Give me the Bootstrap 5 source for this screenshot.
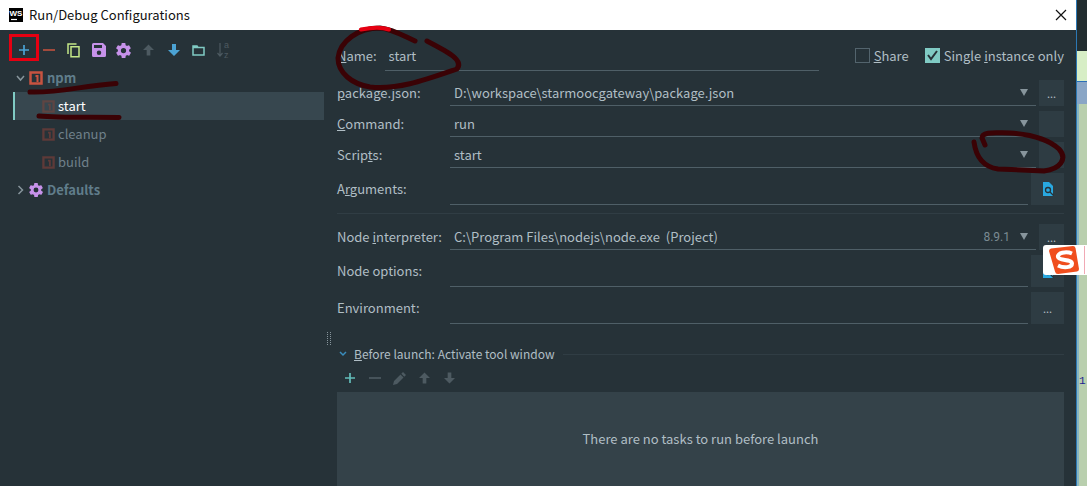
<!DOCTYPE html>
<html lang="en">
<head>
<meta charset="utf-8">
<meta name="viewport" content="width=device-width, initial-scale=1">
<title>Run/Debug Configurations</title>
<link href="https://cdn.jsdelivr.net/npm/bootstrap@5.3.0/dist/css/bootstrap.min.css" rel="stylesheet">
<style>
  body { background: #263238; color: #b0bec5; font: 13px/20px "Noto Sans CJK SC", "Noto Sans", sans-serif; overflow: hidden; }
  svg { display: block; flex: none; }
  .titlebar { height: 30px; background: #fff; color: #111; padding: 0 9px; gap: 6px; }
  .titlebar button, .tool, .disclosure { border: 0; background: none; padding: 0; color: inherit; }
  .ws { width: 14px; height: 14px; }
  .sidebar { width: 324px; padding: 6px 0 0 11px; }
  .tool { width: 25px; height: 28px; display: flex; align-items: center; justify-content: center; }
  .tree { padding-left: 2px; }
  .tree-row { height: 28px; border-left: 2px solid transparent; color: #6f808a; text-decoration: none; }
  .tree-row.group { color: #607d8b; font-weight: 700; gap: 4px; padding-left: 1px; }
  .tree-row.leaf { padding-left: 27px; gap: 3px; }
  .tree-row.picked { background: #37474f; border-color: #80cbc4; color: #fff; }
  .grip { width: 13px; padding: 302px 0 0 3px; }
  .main-form { padding: 10px 12px 0 0; }
  .name-row { height: 31px; margin-bottom: 9px; }
  .name-box { width: 434px; height: 31px; }
  .form-rows { gap: 5px; }
  .line { border: 0; border-bottom: 1px solid #4f5f67; background: none; color: inherit; border-radius: 0; outline: 0; }
  .short, .tall { gap: 3px; }
  .short { height: 26px; }
  .tall { height: 32px; }
  .caption { width: 110px; flex: none; white-space: nowrap; }
  .line select { appearance: none; border: 0; background: none; color: inherit; padding: 0 4px; outline: 0; min-width: 0; }
  .line .version { font-size: 12px; color: #7b8b93; margin-right: 10px; font-family: Roboto, sans-serif; }
  .side-btn { border: 0; background: #2e3c43; color: #b0bec5; padding: 0; font-size: 11px; flex: none; display: flex; align-items: center; justify-content: center; }
  .short .side-btn { width: 25px; height: 26px; }
  .tall .side-btn { width: 33px; height: 32px; }
  .rule { height: 1px; background: #303d44; }
  .second { margin-top: 10px; }
  .tick { appearance: none; width: 15px; height: 15px; margin: 0; border: 1px solid #53646d; }
  .tick:checked { border-color: #80cbc4; background: #80cbc4 url("data:image/svg+xml,%3Csvg xmlns='http://www.w3.org/2000/svg' viewBox='0 0 13 13'%3E%3Cpath d='M2 6l3 4 6-8' fill='none' stroke='%23263238' stroke-width='2'/%3E%3C/svg%3E"); }
  .launch { margin-top: 20px; font-size: 12px; }
  .tasks { background: #344249; min-height: 94px; }
  .desktop { width: 11px; border-left: 1px solid #2c78b4; background: #b9cfae; }
  .desk-dark { height: 51px; background: #222d30; }
  .desk-light { height: 30px; background: #d7eec6; }
  .desk-blue { height: 23px; background: #8aa6c6; border-top: 1px solid #2c6fb8; }
  .desk-rest { border-left: 2px solid #8ab6c1; height: 382px; color: #1c1c90; font: 11px/16px "Liberation Mono", monospace; padding-top: 269px; }
  .mark-left { left: 0; top: 0; pointer-events: none; }
  .mark-right { right: 0; top: 125px; pointer-events: none; }
  .ime { right: 0; top: 245px; width: 44px; height: 30px; background: #fff; border-radius: 3px 0 0 3px; padding-left: 5px; }
</style>
</head>
<body>
<svg width="0" height="0" class="position-absolute">
  <symbol id="npm" viewBox="0 0 14 14"><path d="M1.500 1.500h11v11h-11z" fill="none" stroke="currentColor" stroke-width="2.500"/><path d="M6.500 4h3v7H7.500V6h-1z" fill="currentColor"/></symbol>
  <symbol id="gear" viewBox="2 2 20 20"><path fill="currentColor" d="M19.400 13a7.500 7.500 0 0 0 0-2l2.100-1.600a.5.5 0 0 0 .1-.6l-2-3.500a.5.5 0 0 0-.6-.2l-2.500 1a7 7 0 0 0-1.700-1L14.500 2.400a.5.5 0 0 0-.5-.4h-4a.5.5 0 0 0-.5.400L9.100 5.100a7 7 0 0 0-1.700 1l-2.500-1a.5.5 0 0 0-.6.200l-2 3.500a.5.5 0 0 0 .1.600L4.600 11a7.500 7.500 0 0 0 0 2l-2.100 1.600a.5.5 0 0 0-.1.600l2 3.500a.5.5 0 0 0 .6.200l2.500-1a7 7 0 0 0 1.700 1l.4 2.700a.5.5 0 0 0 .5.400h4a.5.5 0 0 0 .5-.4l.4-2.700a7 7 0 0 0 1.700-1l2.500 1a.5.5 0 0 0 .6-.2l2-3.500a.5.5 0 0 0-.1-.6zM12 15.500a3.500 3.500 0 1 1 0-7 3.500 3.500 0 0 1 0 7z"/></symbol>
  <symbol id="plus" viewBox="0 0 12 12"><path d="M6 1v10M1 6h10" stroke="currentColor" stroke-width="1.700"/></symbol>
  <symbol id="minus" viewBox="0 0 12 12"><path d="M0 6h12" stroke="currentColor" stroke-width="1.700"/></symbol>
  <symbol id="up" viewBox="0 0 12 12"><path d="M6 0l6 6H8v6H4V6H0z" fill="currentColor"/></symbol>
  <symbol id="down" viewBox="0 0 12 12"><path d="M6 12L0 6h4V0h4v6h4z" fill="currentColor"/></symbol>
  <symbol id="caret" viewBox="0 0 8 7"><path d="M0 0h8L4 7z" fill="#87959c"/></symbol>
  <symbol id="find" viewBox="0 0 12 14"><path d="M1 0h6l4 4v10H1z" fill="#29a8e0"/><circle cx="6" cy="8" r="2.500" fill="none" stroke="#263238" stroke-width="1.300"/><path d="M8 10l3.500 3.500" stroke="#263238" stroke-width="1.300"/></symbol>
</svg>

<div class="d-flex min-vh-100 position-relative">
  <div class="d-flex flex-column flex-grow-1">
    <header class="titlebar d-flex align-items-center">
      <svg class="ws" viewBox="0 0 14 14"><path d="M0 0h14v14H0z"/><text x="7" y="8" text-anchor="middle" font-family="Liberation Sans" font-size="8" font-weight="700" fill="#fff">WS</text><path d="M2 11.500h6" stroke="#fff" stroke-width="1.200"/></svg>
      <span>Run/Debug Configurations</span>
      <button class="ms-auto" aria-label="Close"><svg width="12" height="12" viewBox="0 0 12 12"><path d="M1 1l10 10M11 1L1 11" stroke="#111" stroke-width="1.200"/></svg></button>
    </header>

    <div class="d-flex flex-grow-1">
      <nav class="sidebar flex-shrink-0">
        <div class="d-flex">
          <button class="tool" aria-label="Add" style="color:#4ba3d4"><svg width="12" height="12"><use href="#plus"/></svg></button>
          <button class="tool" aria-label="Remove" style="color:#b9503e"><svg width="12" height="12"><use href="#minus"/></svg></button>
          <button class="tool" aria-label="Copy"><svg width="13" height="15" viewBox="0 0 13 15" fill="none" stroke="#c3e887" stroke-width="1.500"><path d="M4 3.700h8v10H4zM1 11V1h8.500"/></svg></button>
          <button class="tool" aria-label="Save"><svg width="14" height="14" viewBox="0 0 14 14"><path fill="#c792ea" fill-rule="evenodd" d="M1.500 0H11l3 3v9.500a1.500 1.500 0 0 1-1.500 1.500h-11A1.500 1.500 0 0 1 0 12.500v-11A1.500 1.500 0 0 1 1.500 0zM2 2v3h8V2zm5 5.500a2.200 2.200 0 1 0 0 4.500 2.200 2.200 0 0 0 0-4.500z"/></svg></button>
          <button class="tool" aria-label="Settings" style="color:#c792ea"><svg width="15" height="15"><use href="#gear"/></svg></button>
          <button class="tool" aria-label="Move up" style="color:#4d5a61"><svg width="11" height="12"><use href="#up"/></svg></button>
          <button class="tool" aria-label="Move down" style="color:#4ba3d4"><svg width="12" height="12"><use href="#down"/></svg></button>
          <button class="tool" aria-label="New folder"><svg width="13" height="11" viewBox="0 0 13 11"><path d="M1 2.500h11v7.500H1zM1 2.500V1h4l1 1.500" fill="none" stroke="#80cbc4" stroke-width="1.500"/></svg></button>
          <button class="tool" aria-label="Sort"><svg width="14" height="24" viewBox="0 0 14 24" fill="#4d5a61"><path d="M3 5v13M0.500 15L3 18l2.500-3" fill="none" stroke="#4d5a61" stroke-width="1.200"/><text x="7" y="10" font-size="9" font-family="Liberation Sans">a</text><text x="7" y="20" font-size="9" font-family="Liberation Sans">z</text></svg></button>
        </div>
        <div class="tree">
          <a href="#" class="tree-row group d-flex align-items-center"><svg width="9" height="8" viewBox="0 0 9 8"><path d="M1 2l3.500 4L8 2" fill="none" stroke="#87959c" stroke-width="1.500"/></svg><svg width="14" height="14" style="color:#c75340"><use href="#npm"/></svg>npm</a>
          <a href="#" class="tree-row leaf picked d-flex align-items-center"><svg width="13" height="13" style="color:#5e4543"><use href="#npm"/></svg>start</a>
          <a href="#" class="tree-row leaf d-flex align-items-center"><svg width="13" height="13" style="color:#5e3a38"><use href="#npm"/></svg>cleanup</a>
          <a href="#" class="tree-row leaf d-flex align-items-center"><svg width="13" height="13" style="color:#5e3a38"><use href="#npm"/></svg>build</a>
          <a href="#" class="tree-row group d-flex align-items-center"><svg width="9" height="10" viewBox="0 0 9 10"><path d="M2.500 1L6.500 5l-4 4" fill="none" stroke="#87959c" stroke-width="1.500"/></svg><svg width="14" height="14" style="color:#c792ea"><use href="#gear"/></svg>Defaults</a>
        </div>
      </nav>
      <div class="grip flex-shrink-0"><svg width="4" height="14" viewBox="0 0 4 14"><path d="M.5 0v14M3.500 0v14" stroke="#87959c" stroke-dasharray="1 1"/></svg></div>

      <form class="main-form d-flex flex-column flex-grow-1">
        <div class="name-row d-flex align-items-center">
          <label for="name"><u>N</u>ame:</label>
          <input id="name" class="line name-box ms-2 px-1" value="start">
          <input id="share" type="checkbox" class="tick ms-auto"><label for="share" class="ms-1 me-3"><u>S</u>hare</label>
          <input id="single" type="checkbox" class="tick" checked><label for="single" class="ms-1">Single <u>i</u>nstance only</label>
        </div>
        <div class="form-rows d-flex flex-column">
          <div class="short d-flex align-items-center"><label class="caption" for="pkg"><u>p</u>ackage.json:</label>
            <div class="line d-flex align-items-center flex-grow-1 h-100 pe-2"><select id="pkg" class="flex-grow-1"><option>D:\workspace\starmoocgateway\package.json</option></select><svg width="8" height="7"><use href="#caret"/></svg></div><button type="button" class="side-btn">...</button></div>
          <div class="short d-flex align-items-center"><label class="caption" for="cmd"><u>C</u>ommand:</label>
            <div class="line d-flex align-items-center flex-grow-1 h-100 pe-2"><select id="cmd" class="flex-grow-1"><option>run</option></select><svg width="8" height="7"><use href="#caret"/></svg></div><button type="button" class="side-btn" aria-label="Command options"></button></div>
          <div class="short d-flex align-items-center"><label class="caption" for="scr">Scrip<u>t</u>s:</label>
            <div class="line d-flex align-items-center flex-grow-1 h-100 pe-2"><select id="scr" class="flex-grow-1"><option>start</option></select><svg width="8" height="7"><use href="#caret"/></svg></div><button type="button" class="side-btn" aria-label="Script options"></button></div>
          <div class="tall d-flex align-items-center"><label class="caption" for="arg">A<u>r</u>guments:</label><input id="arg" class="line flex-grow-1 h-100"><button type="button" class="side-btn" aria-label="Expand arguments"><svg width="12" height="14"><use href="#find"/></svg></button></div>
        </div>
        <div class="rule mt-2"></div>
        <div class="form-rows second d-flex flex-column">
          <div class="short d-flex align-items-center"><label class="caption" for="node">Node <u>i</u>nterpreter:</label>
            <div class="line d-flex align-items-center flex-grow-1 h-100 pe-2"><select id="node" class="flex-grow-1"><option>C:\Program Files\nodejs\node.exe &nbsp;(Project)</option></select><span class="version">8.9.1</span><svg width="8" height="7"><use href="#caret"/></svg></div><button type="button" class="side-btn">...</button></div>
          <div class="tall d-flex align-items-center"><label class="caption" for="opt">Node options:</label><input id="opt" class="line flex-grow-1 h-100"><button type="button" class="side-btn" aria-label="Expand options"><svg width="12" height="14"><use href="#find"/></svg></button></div>
          <div class="tall d-flex align-items-center"><label class="caption" for="env">Environment:</label><input id="env" class="line flex-grow-1 h-100"><button type="button" class="side-btn">...</button></div>
        </div>
        <div class="launch d-flex align-items-center">
          <button type="button" class="disclosure d-flex align-items-center"><svg width="17" height="6" viewBox="0 0 17 6"><path d="M3 1l3 3 3-3" fill="none" stroke="#3a8dbd" stroke-width="1.500"/></svg><span><u>B</u>efore launch: Activate tool window</span></button>
          <div class="rule flex-grow-1 ms-2"></div>
        </div>
        <div class="d-flex" style="color:#4d5a61">
          <button type="button" class="tool" aria-label="Add task" style="color:#63bdb9"><svg width="12" height="12"><use href="#plus"/></svg></button>
          <button type="button" class="tool" aria-label="Remove task"><svg width="12" height="12"><use href="#minus"/></svg></button>
          <button type="button" class="tool" aria-label="Edit task"><svg width="13" height="13" viewBox="0 0 13 13"><path fill="currentColor" d="M0 13l1-4 6.500-6.500 3 3L4 12zM8.300 1.700L10 0l3 3-1.700 1.700z"/></svg></button>
          <button type="button" class="tool" aria-label="Move task up"><svg width="11" height="12"><use href="#up"/></svg></button>
          <button type="button" class="tool" aria-label="Move task down"><svg width="11" height="12"><use href="#down"/></svg></button>
        </div>
        <div class="tasks flex-grow-1 d-flex align-items-center justify-content-center">There are no tasks to run before launch</div>
      </form>
    </div>
  </div>

  <aside class="desktop flex-shrink-0 overflow-hidden">
    <div class="desk-dark"></div><div class="desk-light"></div><div class="desk-blue"></div>
    <div class="desk-rest">1</div>
  </aside>

  <svg class="mark-left position-absolute" width="480" height="125" viewBox="0 0 480 125" fill="none" stroke="#3a0205" stroke-width="5" stroke-linecap="round">
    <path d="M10.500 35.500h27v24h-27z" stroke="#e60012" stroke-width="3" stroke-linecap="butt"/>
    <path d="M30 92C60 93 80 86 116 83.500M39 116C60 118 90 117 119 117.500"/>
    <path d="M415 41C402 35 392 29 380 28C358 28 340 41 338 58C338 73 352 84 370 87C398 90 425 80 457 69C464 60 448 52 427 41"/>
    <path d="M361 29.500C373 27 382 27 389 29.500" stroke="#e60012" stroke-width="4"/>
  </svg>
  <svg class="mark-right position-absolute" width="127" height="60" viewBox="0 0 127 60" fill="none" stroke="#3a0205" stroke-width="5" stroke-linecap="round">
    <path d="M14 17C16 32 24 42 38 44L84 46C100 44 108 34 99 24C86 12 66 9 50 8C36 8 22 6 22 13L25 20"/>
  </svg>
  <div class="ime position-absolute d-flex align-items-center">
    <svg width="38" height="30" viewBox="0 0 38 30"><path d="M3 3.500L25 1q2 0 2.500 2L31 24q0 2-2 2.500L10 29q-2.500 0-3-2.500L1 6q0-2 2-2.500z" fill="#f04e1e"/><path d="M24 8.500C18 6 9 8 10 12c1 4 14 2 14 6.500 0 4-8 5-14 2" fill="none" stroke="#fff" stroke-width="4"/><path d="M36.500 1v28" stroke="#f1a9b5"/></svg>
  </div>
</div>
<script src="https://cdn.jsdelivr.net/npm/bootstrap@5.3.0/dist/js/bootstrap.bundle.min.js"></script>
</body>
</html>
